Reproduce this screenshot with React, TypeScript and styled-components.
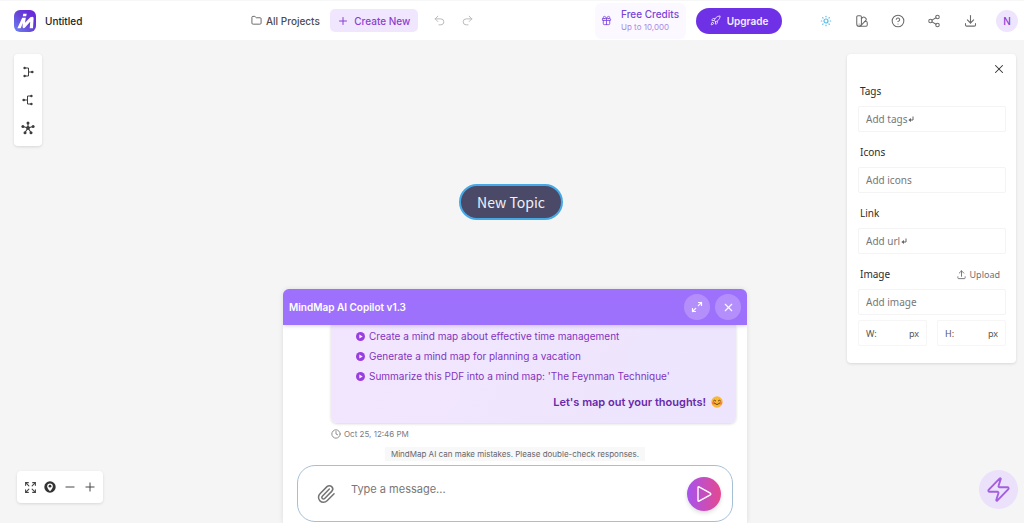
import React from "react";
import styled, { createGlobalStyle, css } from "styled-components";
import {
  Folder, Plus, Minus, Undo2, Redo2, Gift, Rocket, SwatchBook, CircleHelp, Share2,
  X, Expand, Paperclip, Zap, Clock,
} from "lucide-react";
import { TbDownload, TbUpload } from "react-icons/tb";

const GlobalStyle = createGlobalStyle`
  *, *::before, *::after { box-sizing: border-box; }
  body {
    margin: 0;
    overflow: hidden;
    background: #f5f5f5;
    color: #333;
    font-family: Inter, "Liberation Sans", sans-serif;
    font-size: 10px;
  }
  button, input, textarea { font: inherit; color: inherit; }
  button { border: 0; padding: 0; background: none; cursor: pointer; }
  svg { display: block; flex: none; }
`;

const Page = styled.div`
  display: flex;
  flex-direction: column;
  height: 100vh;
`;

const Header = styled.header`
  display: flex;
  align-items: center;
  height: 40px;
  flex: none;
  padding: 0 6px 0 14px;
  background: #fff;
  border-top: 1px solid #f7f7f7;
`;

const Brand = styled.div`
  display: flex;
  align-items: center;
  gap: 9px;
  width: 237px;
  font-weight: 500;
  color: #222;
`;

const HeaderNav = styled.nav`
  display: flex;
  align-items: center;
  flex: 1;
`;

const ProjectsLink = styled.a`
  display: flex;
  align-items: center;
  gap: 4px;
  margin-right: 10px;
  color: #4c4c50;
  font-weight: 500;
  text-decoration: none;
  white-space: nowrap;
`;

const CreateButton = styled.button`
  display: flex;
  align-items: center;
  justify-content: center;
  gap: 5px;
  width: 88px;
  height: 23px;
  margin-right: 8px;
  border-radius: 5px;
  background: #f0e7fe;
  color: #8b3fd0;
  font-weight: 500;
  white-space: nowrap;
`;

const HistoryButton = styled.button`
  display: grid;
  place-items: center;
  width: 28px;
  height: 24px;
  color: #b9b9b9;
`;

const Credits = styled.div`
  display: flex;
  align-items: center;
  gap: 9px;
  height: 36px;
  width: 91px;
  margin-right: 10px;
  padding-left: 6px;
  border-radius: 6px;
  background: #fbf9ff;
  color: #7a45d8;
  white-space: nowrap;
`;

const CreditsText = styled.div`
  line-height: 13px;
  font-weight: 500;

  small {
    display: block;
    font-size: 8px;
    line-height: 12px;
    font-weight: 400;
    color: #a98ae6;
  }
`;

const UpgradeButton = styled.button`
  display: flex;
  align-items: center;
  justify-content: center;
  gap: 6px;
  width: 86px;
  height: 26px;
  margin-right: 26px;
  border-radius: 13px;
  background: #6f31e6;
  color: #f3edff;
  font-weight: 600;
`;

const ToolButton = styled.button`
  display: grid;
  place-items: center;
  width: 36px;
  height: 28px;
  color: #6b6b6b;
`;

const Avatar = styled.button`
  width: 22px;
  height: 22px;
  margin-left: 8px;
  border-radius: 50%;
  background: #efe4fd;
  color: #8a3fd6;
  font-weight: 500;
`;

const Canvas = styled.main`
  position: relative;
  display: grid;
  grid-template-columns: 1fr minmax(0, 464px) 1fr;
  flex: 1;
  min-height: 0;
  padding: 14px 8px 0 14px;
`;

const Side = styled.div<{ $end?: boolean }>`
  display: flex;
  flex-direction: column;
  justify-content: space-between;
  align-items: ${(p) => (p.$end ? "flex-end" : "flex-start")};
  padding-bottom: ${(p) => (p.$end ? "14px" : "20px")};
`;

const surface = css`
  background: #fff;
  border-radius: 4px;
  box-shadow: 0 1px 3px rgba(0, 0, 0, 0.12);
`;

const LayoutBar = styled.div`
  ${surface}
  display: flex;
  flex-direction: column;
  width: 28px;
  padding: 4px 0;
`;

const LayoutButton = styled.button`
  display: grid;
  place-items: center;
  height: 28px;
  color: #3d3d3d;
`;

const ZoomBar = styled.div`
  ${surface}
  display: flex;
  margin-left: 3px;
  padding: 0 3px;
`;

const ZoomButton = styled.button`
  display: grid;
  place-items: center;
  width: 20px;
  height: 32px;
  color: #454545;
`;

const Topic = styled.button`
  position: absolute;
  top: 144px;
  left: calc(50% - 53px);
  width: 104px;
  height: 36px;
  border: 2px solid #45a9e6;
  border-radius: 18px;
  background: #4a4a68;
  color: #f1f1f6;
  font-family: "Noto Sans CJK SC", "Noto Sans", sans-serif;
  font-size: 14px;
  line-height: 20px;
`;

const Properties = styled.aside`
  ${surface}
  display: flex;
  flex-direction: column;
  gap: 10px;
  width: 169px;
  padding: 8px 10px 17px 11px;
  font-family: "Noto Sans", sans-serif;
`;

const PropertiesClose = styled.button`
  display: grid;
  place-items: center;
  align-self: flex-end;
  width: 15px;
  height: 14px;
  margin-bottom: -5px;
  color: #333;
`;

const Group = styled.div`
  display: flex;
  flex-direction: column;
  gap: 5px;
`;

const GroupHead = styled.div`
  display: flex;
  align-items: center;
  justify-content: space-between;
  height: 20px;
  padding: 0 6px 0 2px;
  color: #2c2c2c;
`;

const UploadButton = styled.button`
  display: flex;
  align-items: center;
  gap: 3px;
  font-size: 9px;
  color: #707070;
`;

const FieldBox = styled.div`
  position: relative;
`;

const Field = styled.input`
  display: block;
  width: 100%;
  height: 26px;
  padding: 0 7px;
  border: 1px solid #f4f4f4;
  border-radius: 2px;
  background: #fff;

  &::placeholder { color: #777; opacity: 1; }
`;

const ReturnMark = styled.span<{ $after: number }>`
  position: absolute;
  top: 10px;
  left: ${(p) => p.$after}px;
  color: #666;
`;

const SizeRow = styled.div`
  display: grid;
  grid-template-columns: 1fr 1fr;
  gap: 10px;
`;

const SizeField = styled.label`
  display: flex;
  align-items: center;
  height: 26px;
  padding: 0 7px;
  border: 1px solid #f6f6f6;
  border-radius: 2px;
  font-size: 9px;
  color: #555;

  input {
    flex: 1;
    width: 0;
    border: 0;
    padding: 0 2px;
    outline: 0;
  }
`;

const QuickButton = styled.button`
  display: grid;
  place-items: center;
  width: 39px;
  height: 39px;
  margin-right: -2px;
  border-radius: 50%;
  background: #ebe1fb;
  color: #a45fe0;
`;

const Copilot = styled.section`
  display: flex;
  flex-direction: column;
  align-self: end;
  height: 234px;
  border-radius: 6px 6px 0 0;
  background: #fff;
  box-shadow: 0 0 5px rgba(0, 0, 0, 0.1);
  overflow: hidden;
`;

const CopilotHeader = styled.div`
  display: flex;
  align-items: center;
  gap: 5px;
  flex: none;
  height: 36px;
  padding: 0 6px;
  background: #9d71fb;
  color: #fff;
  box-shadow: 0 1px 4px rgba(60, 30, 120, 0.2);
  z-index: 1;

  h2 {
    flex: 1;
    margin: 0;
    font-size: 10px;
    font-weight: 600;
  }
`;

const RoundButton = styled.button`
  display: grid;
  place-items: center;
  width: 26px;
  height: 26px;
  border-radius: 50%;
  background: #b48ffc;
`;

const Bubble = styled.div`
  flex: none;
  margin: 0 11px 0 48px;
  height: 98px;
  padding: 0 13px 0 25px;
  border-radius: 0 0 6px 6px;
  background: linear-gradient(115deg, #f2e6fe, #ece5fd);
  box-shadow: 0 1px 3px rgba(0, 0, 0, 0.16);
  color: #8234bd;

  ul {
    display: grid;
    grid-auto-rows: 20px;
    list-style: none;
    margin: 0;
    padding: 1px 0 0;
  }
`;

const Suggestion = styled.li`
  display: flex;
  align-items: center;
  gap: 4px;
  white-space: nowrap;
`;

const Closing = styled.p`
  display: flex;
  align-items: center;
  justify-content: flex-end;
  gap: 5px;
  height: 16px;
  margin: 8px 0 0;
  font-size: 11px;
  font-weight: 600;
  color: #6929a8;
`;

const Timestamp = styled.div`
  display: flex;
  align-items: center;
  gap: 3px;
  height: 22px;
  margin-left: 48px;
  font-size: 8px;
  color: #7c7c82;
`;

const Disclaimer = styled.p`
  align-self: center;
  margin: 2px 0 4px;
  padding: 0 6px;
  background: #f8f8f9;
  font-size: 8px;
  line-height: 14px;
  color: #66666c;
  white-space: nowrap;
`;

const Composer = styled.form`
  display: flex;
  align-items: center;
  flex: none;
  height: 57px;
  margin: 0 14px;
  padding: 0 11px 0 18px;
  border: 1px solid #a5bfd6;
  border-radius: 18px;
`;

const AttachButton = styled.button`
  width: 20px;
  height: 20px;
  margin-right: 15px;
  color: #747474;
`;

const MessageInput = styled.textarea`
  flex: 1;
  min-width: 0;
  height: 34px;
  padding: 0;
  border: 0;
  outline: 0;
  resize: none;
  font-size: 11px;
  line-height: 24px;

  &::placeholder { color: #777; opacity: 1; }
`;

const SendButton = styled.button`
  display: grid;
  place-items: center;
  width: 34px;
  height: 34px;
  border-radius: 50%;
  background: linear-gradient(90deg, #a653ee, #e5488f);
  box-shadow: 0 2px 4px rgba(0, 0, 0, 0.14);
`;

const Logo = () => (
  <svg width="22" height="22" viewBox="0 0 22 22" aria-hidden="true">
    <defs>
      <linearGradient id="logo" x1="0" y1="1" x2="1" y2="0">
        <stop offset="0" stopColor="#6f86f4" />
        <stop offset="0.5" stopColor="#6544d6" />
        <stop offset="1" stopColor="#6a1fdc" />
      </linearGradient>
    </defs>
    <rect width="22" height="22" rx="6" fill="url(#logo)" />
    <path d="M3.400 18.200 8.200 7.800H11.800L11 12.800 16.300 7.200Q19.800 5.600 19.600 8.600L19 18.200H15.700L16.200 11.800 10.800 17.800Q8.600 19 8.600 16.600L8.800 13 6.700 18.200Z" fill="#fff" />
    <path d="M9.300 3.800h3.400l-.5 2.400H8.800Z" fill="#fff" />
  </svg>
);

const Sun = () => (
  <svg width="12" height="12" viewBox="0 0 12 12" fill="none" stroke="#5bbbe8" strokeLinecap="round">
    <circle cx="6" cy="6" r="2" strokeWidth="1.200" />
    <path d="M6 1.300v.5M6 10.200v.5M1.300 6h.5M10.200 6h.5M2.700 2.700l.3.3M9 9l.3.300M2.700 9.300l.3-.3M9 3l.3-.3" strokeWidth="1.200" />
  </svg>
);

const BranchIcon = ({ flip }: { flip?: boolean }) => (
  <svg width="12" height="12" viewBox="0 0 12 12" transform={flip ? "scale(-1 1)" : undefined}>
    <path d="M3 2h3.500v8H3M6.500 6H10" fill="none" stroke="currentColor" />
    <circle cx="2.600" cy="2" r="1.200" fill="currentColor" />
    <circle cx="2.600" cy="10" r="1.200" fill="currentColor" />
    <circle cx="10.300" cy="6" r="1.300" fill="currentColor" />
  </svg>
);

const RadialIcon = () => (
  <svg width="14" height="14" viewBox="0 0 14 14" fill="currentColor">
    <path d="M7 7V2M7 7 2 5.500M7 7l5-1.500M7 7l-3 4.500M7 7l3 4.500" stroke="currentColor" strokeWidth="1.100" />
    <circle cx="7" cy="7" r="1.900" />
    <circle cx="7" cy="2" r="1.500" />
    <circle cx="1.900" cy="5.500" r="1.500" />
    <circle cx="12.100" cy="5.500" r="1.500" />
    <circle cx="4" cy="11.800" r="1.500" />
    <circle cx="10" cy="11.800" r="1.500" />
  </svg>
);

const LocateIcon = () => (
  <svg width="12" height="12" viewBox="0 0 12 12">
    <circle cx="6" cy="6" r="5.700" fill="#333" />
    <path d="M6 10.200C4.300 8.400 3.200 6.900 3.200 5.200a2.800 2.800 0 0 1 5.600 0C8.800 6.900 7.700 8.400 6 10.200Z" fill="#fff" />
    <circle cx="6" cy="5.200" r="1.400" fill="#333" />
  </svg>
);

const GrowIcon = () => (
  <svg width="12" height="12" viewBox="0 0 12 12" fill="none" stroke="#fff" strokeWidth="1.200" strokeLinecap="round" strokeLinejoin="round">
    <path d="M7.500 1.500h3v3M10.500 1.500 7.300 4.700M4.500 10.500h-3v-3M1.500 10.500l3.200-3.200" />
  </svg>
);

const ReturnIcon = () => (
  <svg width="6" height="7" viewBox="0 0 6 7">
    <path d="M5 .500V4H2.500" fill="none" stroke="currentColor" />
    <path d="M3 2v4L.3 4Z" fill="currentColor" />
  </svg>
);

const Bullet = () => (
  <svg width="9" height="9" viewBox="0 0 9 9">
    <circle cx="4.500" cy="4.500" r="4.500" fill="#9a3fdf" />
    <path d="M3.300 2.400 6.700 4.500 3.300 6.600Z" fill="#f6ebff" />
  </svg>
);

const Smile = () => (
  <svg width="12" height="12" viewBox="0 0 12 12" role="img" aria-label="smiling face">
    <circle cx="6" cy="6" r="5.700" fill="#f8b735" />
    <circle cx="2.500" cy="7" r="1.500" fill="#f47b45" />
    <circle cx="9.500" cy="7" r="1.500" fill="#f47b45" />
    <path d="M2.500 4.800q1-1.400 2.200 0M7.300 4.800q1-1.400 2.200 0M3.500 7.400q2.500 2.600 5 0" fill="none" stroke="#69401d" strokeWidth="1" strokeLinecap="round" />
  </svg>
);

const SendIcon = () => (
  <svg width="18" height="18" viewBox="0 0 18 18" fill="none" stroke="#fff" strokeWidth="1.400" strokeLinejoin="round">
    <path d="M3 2.500Q3 1.400 4 1.900L15.300 8.200Q16.400 9 15.300 9.800L4 16.100Q3 16.600 3 15.500Z" />
  </svg>
);

const suggestions = [
  "Create a mind map about effective time management",
  "Generate a mind map for planning a vacation",
  "Summarize this PDF into a mind map: 'The Feynman Technique'",
];

const groups = [
  { id: "tags", label: "Tags", hint: "Add tags", returnAt: 50 },
  { id: "icons", label: "Icons", hint: "Add icons" },
  { id: "link", label: "Link", hint: "Add url", returnAt: 43 },
  { id: "image", label: "Image", hint: "Add image" },
];

const tools = [
  { label: "Theme", icon: <Sun /> },
  { label: "Styles", icon: <SwatchBook size={14} strokeWidth={1.8} /> },
  { label: "Help", icon: <CircleHelp size={14} strokeWidth={1.8} /> },
  { label: "Share", icon: <Share2 size={14} strokeWidth={1.8} /> },
  { label: "Download", icon: <TbDownload size={15} strokeWidth={1.7} /> },
];

export default function App() {
  return (
    <Page>
      <GlobalStyle />
      <Header>
        <Brand><Logo />Untitled</Brand>
        <HeaderNav>
          <ProjectsLink href="#projects"><Folder size={11} strokeWidth={1.8} />All Projects</ProjectsLink>
          <CreateButton><Plus size={12} />Create New</CreateButton>
          <HistoryButton aria-label="Undo"><Undo2 size={13} strokeWidth={1.8} /></HistoryButton>
          <HistoryButton aria-label="Redo"><Redo2 size={13} strokeWidth={1.8} /></HistoryButton>
        </HeaderNav>
        <Credits>
          <Gift size={11} strokeWidth={1.8} />
          <CreditsText>Free Credits<small>Up to 10,000</small></CreditsText>
        </Credits>
        <UpgradeButton><Rocket size={11} strokeWidth={1.8} />Upgrade</UpgradeButton>
        {tools.map((t) => <ToolButton key={t.label} aria-label={t.label}>{t.icon}</ToolButton>)}
        <Avatar aria-label="Account">N</Avatar>
      </Header>

      <Canvas>
        <Side>
          <LayoutBar>
            <LayoutButton aria-label="Left layout"><BranchIcon /></LayoutButton>
            <LayoutButton aria-label="Right layout"><BranchIcon flip /></LayoutButton>
            <LayoutButton aria-label="Radial layout"><RadialIcon /></LayoutButton>
          </LayoutBar>
          <ZoomBar>
            <ZoomButton aria-label="Fit to screen"><Expand size={13} strokeWidth={2} /></ZoomButton>
            <ZoomButton aria-label="Center"><LocateIcon /></ZoomButton>
            <ZoomButton aria-label="Zoom out"><Minus size={14} strokeWidth={1.7} /></ZoomButton>
            <ZoomButton aria-label="Zoom in"><Plus size={14} strokeWidth={1.7} /></ZoomButton>
          </ZoomBar>
        </Side>

        <Copilot>
          <CopilotHeader>
            <h2>MindMap AI Copilot v1.3</h2>
            <RoundButton aria-label="Expand"><GrowIcon /></RoundButton>
            <RoundButton aria-label="Close copilot"><X size={13} /></RoundButton>
          </CopilotHeader>
          <Bubble>
            <ul>{suggestions.map((s) => <Suggestion key={s}><Bullet />{s}</Suggestion>)}</ul>
            <Closing>Let's map out your thoughts! <Smile /></Closing>
          </Bubble>
          <Timestamp><Clock size={10} />Oct 25, 12:46 PM</Timestamp>
          <Disclaimer>MindMap AI can make mistakes. Please double-check responses.</Disclaimer>
          <Composer onSubmit={(e) => e.preventDefault()}>
            <AttachButton type="button" aria-label="Attach file"><Paperclip size={20} strokeWidth={1.8} /></AttachButton>
            <MessageInput aria-label="Message" placeholder="Type a message..." />
            <SendButton aria-label="Send"><SendIcon /></SendButton>
          </Composer>
        </Copilot>

        <Side $end>
          <Properties>
            <PropertiesClose aria-label="Close panel"><X size={14} strokeWidth={1.8} /></PropertiesClose>
            {groups.map((g) => (
              <Group key={g.id}>
                <GroupHead>
                  <label htmlFor={g.id}>{g.label}</label>
                  {g.id === "image" && <UploadButton><TbUpload size={11} />Upload</UploadButton>}
                </GroupHead>
                <FieldBox>
                  <Field id={g.id} placeholder={g.hint} />
                  {g.returnAt && <ReturnMark $after={g.returnAt}><ReturnIcon /></ReturnMark>}
                </FieldBox>
                {g.id === "image" && (
                  <SizeRow>
                    <SizeField>W:<input aria-label="Width" />px</SizeField>
                    <SizeField>H:<input aria-label="Height" />px</SizeField>
                  </SizeRow>
                )}
              </Group>
            ))}
          </Properties>
          <QuickButton aria-label="Quick actions"><Zap size={27} strokeWidth={1.7} /></QuickButton>
        </Side>
        <Topic>New Topic</Topic>
      </Canvas>
    </Page>
  );
}
